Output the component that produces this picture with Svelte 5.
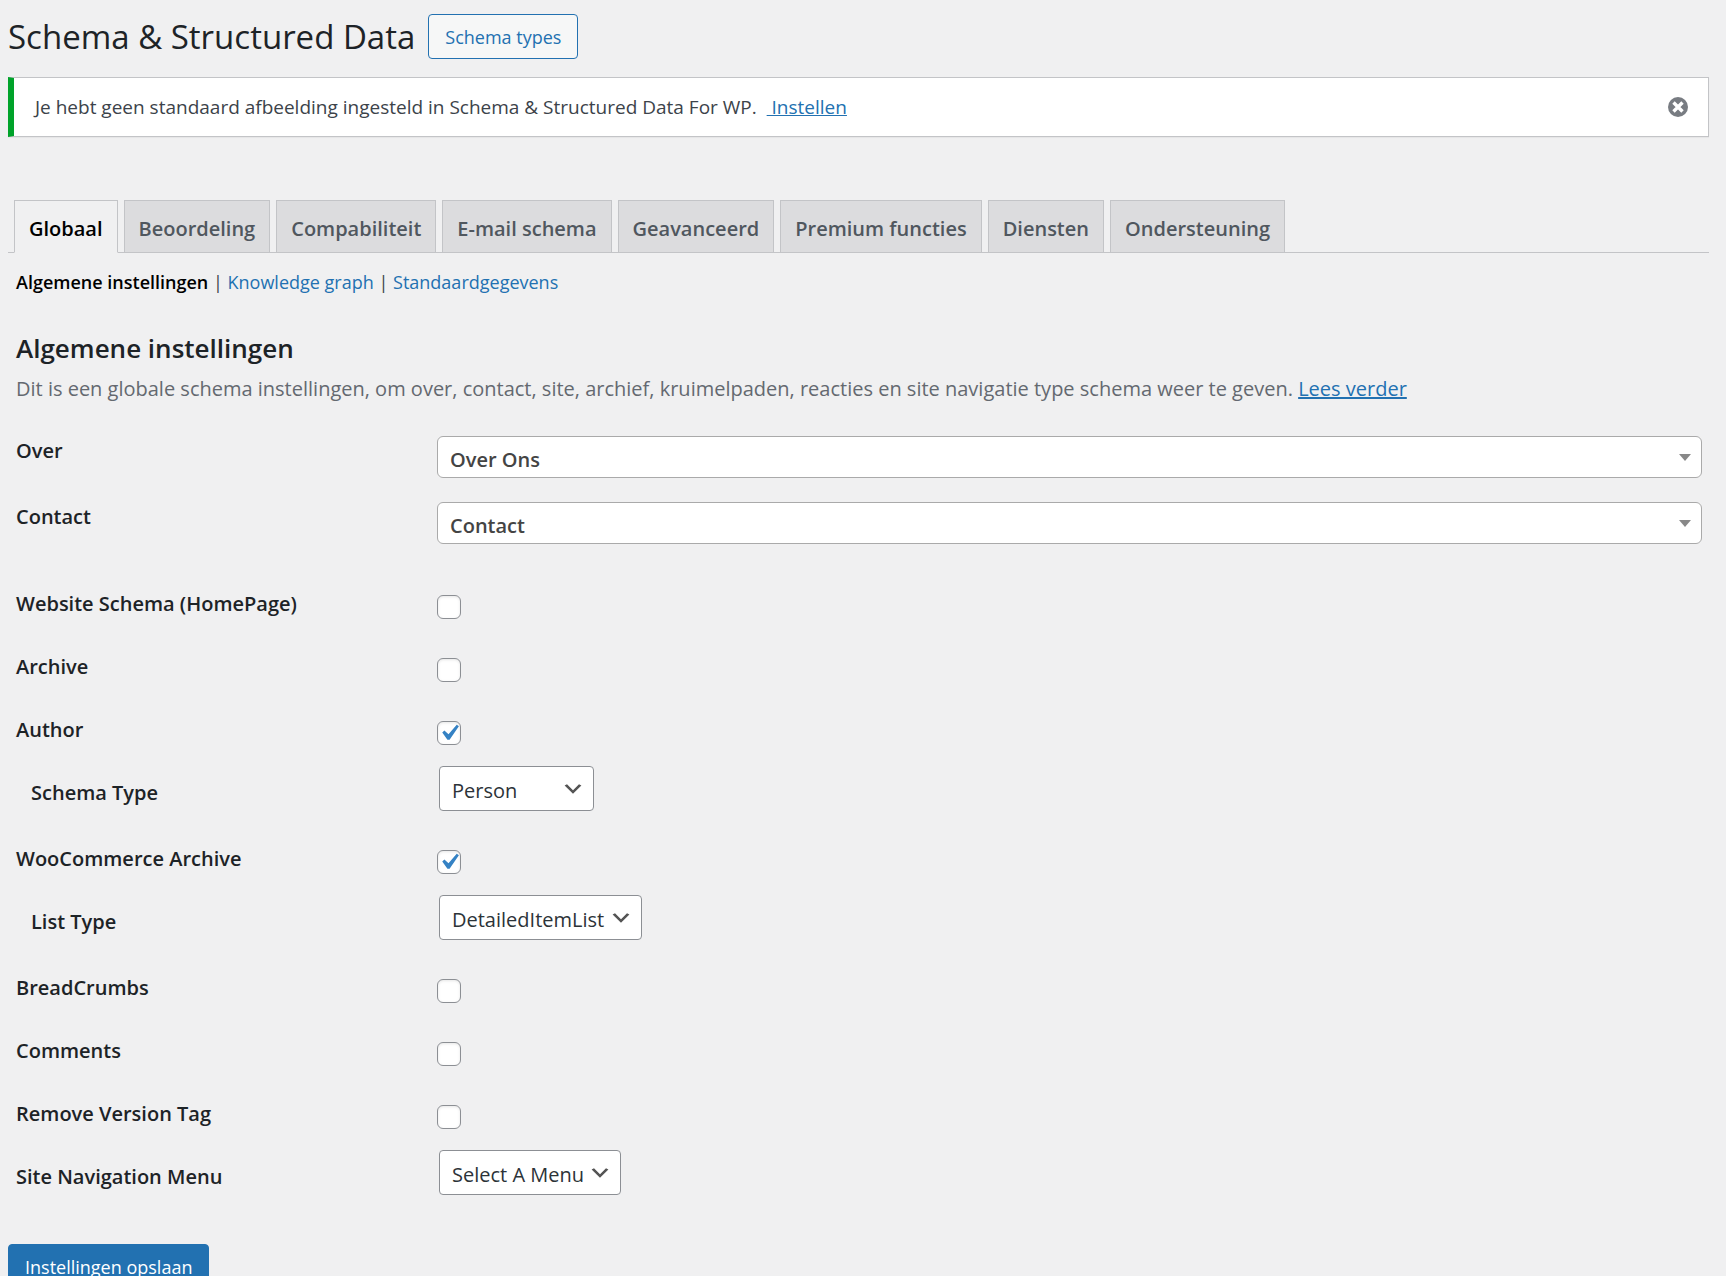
<script lang="ts">
    const tabs = [
        "Globaal",
        "Beoordeling",
        "Compabiliteit",
        "E-mail schema",
        "Geavanceerd",
        "Premium functies",
        "Diensten",
        "Ondersteuning",
    ];

    const pages = [
        { id: "over", label: "Over", value: "Over Ons" },
        { id: "contact", label: "Contact", value: "Contact" },
    ];

    let settings = $state([
        { id: "website", label: "Website Schema (HomePage)", checked: false },
        { id: "archive", label: "Archive", checked: false },
        { id: "author", label: "Author", checked: true },
        { id: "schema-type", label: "Schema Type", child: true, options: ["Person"] },
        { id: "woocommerce", label: "WooCommerce Archive", checked: true },
        { id: "list-type", label: "List Type", child: true, options: ["DetailedItemList", "ItemList"] },
        { id: "breadcrumbs", label: "BreadCrumbs", checked: false },
        { id: "comments", label: "Comments", checked: false },
        { id: "version-tag", label: "Remove Version Tag", checked: false },
        { id: "site-menu", label: "Site Navigation Menu", options: ["Select A Menu"] },
    ]);

    let activeTab = $state("Globaal");
    let noticeOpen = $state(true);

    const selectTab = (e, tab) => {
        e.preventDefault();
        activeTab = tab;
    };
</script>

<div class="wrap">
    <header>
        <h1>Schema &amp; Structured Data</h1>
        <a class="page-action" href="#types">Schema types</a>
    </header>

    {#if noticeOpen}
        <div class="notice">
            <p>
                Je hebt geen standaard afbeelding ingesteld in Schema &amp; Structured Data For WP.&nbsp;
                <a href="#instellen">&nbsp;Instellen</a>
            </p>
            <button class="dismiss" aria-label="Sluiten" onclick={() => (noticeOpen = false)}>
                <svg viewBox="0 0 20 20" width="20" height="20">
                    <circle cx="10" cy="10" r="10" fill="#787c82" />
                    <path d="M5.5 5.5l9 9M14.5 5.5l-9 9" stroke="#fff" stroke-width="3.4" />
                </svg>
            </button>
        </div>
    {/if}

    <nav class="tabs">
        {#each tabs as tab}
            <a href="#tab" class:active={tab === activeTab} onclick={(e) => selectTab(e, tab)}>{tab}</a>
        {/each}
    </nav>

    <form onsubmit={(e) => e.preventDefault()}>
        <div class="panel">
            <nav class="subnav">
                <a class="current" href="#general">Algemene instellingen</a> |
                <a href="#knowledge">Knowledge graph</a> |
                <a href="#default">Standaardgegevens</a>
            </nav>

            <h2>Algemene instellingen</h2>
            <p class="description">
                Dit is een globale schema instellingen, om over, contact, site, archief, kruimelpaden, reacties en site navigatie type schema weer te geven.
                <a href="#more">Lees verder</a>
            </p>

            <div class="pages">
                {#each pages as page}
                    <div class="row">
                        <label for={page.id}>{page.label}</label>
                        <select class="wide" id={page.id}>
                            <option>{page.value}</option>
                        </select>
                    </div>
                {/each}
            </div>

            <div class="settings">
                {#each settings as item}
                    <div class="row" class:child={item.child}>
                        <label for={item.id}>{item.label}</label>
                        {#if item.options}
                            <select class="small" id={item.id}>
                                {#each item.options as option}
                                    <option>{option}</option>
                                {/each}
                            </select>
                        {:else}
                            <input type="checkbox" id={item.id} bind:checked={item.checked} />
                        {/if}
                    </div>
                {/each}
            </div>
        </div>

        <button class="save" type="submit">Instellingen opslaan</button>
    </form>
</div>

<style>
    :global(body) {
        margin: 0;
        background: #f0f0f1;
    }

    .wrap {
        box-sizing: border-box;
        height: 100vh;
        overflow: hidden;
        padding: 14px 17px 0 8px;
        color: #3c434a;
        font-family: "Open Sans", "Segoe UI", sans-serif;
        font-size: 19px;
        line-height: 30px;
    }

    a {
        color: #2271b1;
    }

    header {
        display: flex;
        align-items: center;
        gap: 13px;
        height: 45px;
    }

    h1 {
        margin: 0;
        color: #1d2327;
        font-size: 33px;
        font-weight: 400;
        line-height: 45px;
    }

    .page-action {
        box-sizing: border-box;
        height: 45px;
        padding: 0 16px;
        border: 1px solid #2271b1;
        border-radius: 4px;
        background: #f6f7f7;
        font-size: 18px;
        line-height: 44px;
        text-decoration: none;
    }

    .notice {
        display: flex;
        align-items: center;
        justify-content: space-between;
        box-sizing: border-box;
        height: 60px;
        margin-top: 18px;
        padding: 0 20px 0 21px;
        border: 1px solid #c3c4c7;
        border-left: 6px solid #00a32a;
        background: #fff;
        box-shadow: 0 1px 1px rgba(0, 0, 0, 0.04);

        & p {
            margin: 0;
        }
    }

    .dismiss {
        display: flex;
        padding: 0;
        border: none;
        background: none;
        cursor: pointer;
    }

    .tabs {
        display: flex;
        gap: 6px;
        margin-top: 63px;
        padding-left: 6px;
        border-bottom: 1px solid #c3c4c7;

        & a {
            height: 51px;
            padding: 0 14px;
            border: 1px solid #c3c4c7;
            border-bottom: none;
            background: #dcdcde;
            color: #50575e;
            font-size: 20px;
            font-weight: 600;
            line-height: 55px;
            text-decoration: none;
        }

        & a.active {
            margin-bottom: -1px;
            border-bottom: 1px solid #f0f0f1;
            background: #f0f0f1;
            color: #000;
        }
    }

    .panel {
        padding: 14px 7px 0 8px;
    }

    .subnav {
        font-size: 18px;

        & a {
            text-decoration: none;
        }

        & a.current {
            color: #000;
            font-weight: 600;
        }
    }

    h2 {
        margin: 31px 0 0;
        color: #1d2327;
        font-size: 26px;
        font-weight: 600;
        line-height: 40px;
    }

    .description {
        margin: 6px 0 0;
        color: #646970;
        font-size: 20px;
    }

    .row {
        display: grid;
        grid-template-columns: 421px 1fr;
        align-items: start;

        & label {
            color: #1d2327;
            font-size: 20px;
            font-weight: 600;
        }

        &.child label {
            padding-left: 15px;
        }
    }

    .pages {
        margin-top: 32px;

        & .row {
            height: 66px;
        }
    }

    .settings {
        margin-top: 9px;

        & .row {
            min-height: 63px;
        }

        & label {
            margin-top: 12px;
        }
    }

    select {
        box-sizing: border-box;
        appearance: none;
        font-family: inherit;
        font-size: 20px;
        background-color: #fff;
        background-repeat: no-repeat;
    }

    .wide {
        width: 100%;
        height: 42px;
        padding: 4px 30px 0 12px;
        border: 1px solid #aaa;
        border-radius: 6px;
        background-image: url('data:image/svg+xml,<svg xmlns="http://www.w3.org/2000/svg" viewBox="0 0 12 7"><path d="M0 0h12L6 7z" fill="%23888"/></svg>');
        background-position: right 10px center;
        background-size: 12px 7px;
        color: #444;
        font-weight: 600;
    }

    .small {
        justify-self: start;
        min-width: 155px;
        height: 45px;
        margin: 0 0 21px 2px;
        padding: 3px 36px 0 12px;
        border: 1px solid #8c8f94;
        border-radius: 4px;
        background-image: url('data:image/svg+xml,<svg xmlns="http://www.w3.org/2000/svg" viewBox="0 0 20 20"><path d="M5 6l5 5 5-5 2 1-7 7-7-7 2-1z" fill="%23555"/></svg>');
        background-position: right 8px center;
        background-size: 24px 24px;
        color: #2c3338;
    }

    input[type="checkbox"] {
        box-sizing: border-box;
        appearance: none;
        width: 24px;
        height: 24px;
        margin: 18px 0 0;
        border: 1px solid #8c8f94;
        border-radius: 6px;
        background: #fff center / 32px 32px no-repeat;
        box-shadow: inset 0 1px 3px rgba(0, 0, 0, 0.1);

        &:checked {
            background-image: url('data:image/svg+xml,<svg xmlns="http://www.w3.org/2000/svg" viewBox="0 0 20 20"><path d="M14.83 4.89l1.34.94-5.81 8.38H9.02L5.78 9.67l1.34-1.25 2.57 2.4z" fill="%233582c4"/></svg>');
        }
    }

    .save {
        height: 45px;
        margin-top: 28px;
        padding: 0 16px;
        border: 1px solid #2271b1;
        border-radius: 4px;
        background: #2271b1;
        color: #fff;
        font-family: inherit;
        font-size: 18px;
        cursor: pointer;
    }
</style>
